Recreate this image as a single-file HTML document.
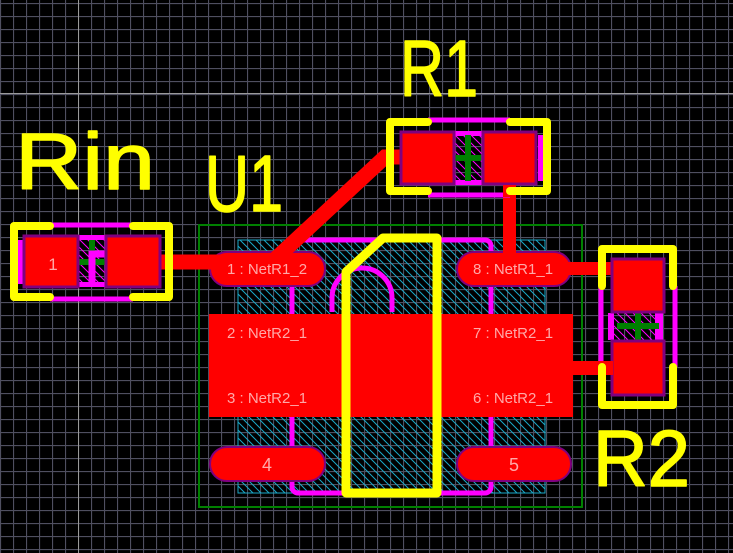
<!DOCTYPE html>
<html><head><meta charset="utf-8"><style>html,body{margin:0;padding:0;background:#000;width:733px;height:553px;overflow:hidden}svg{display:block}</style></head><body>
<svg width="733" height="553" viewBox="0 0 733 553" xmlns="http://www.w3.org/2000/svg">
<defs>
<pattern id="g" x="0" y="3" width="13" height="13" patternUnits="userSpaceOnUse">
<path d="M0.5 0V13M0 0.5H13" stroke="#4f4f60" stroke-width="1.2" fill="none"/>
</pattern>
<pattern id="h" width="8" height="8" patternUnits="userSpaceOnUse">
<path d="M0 0L8 8M-4 4L4 12M4 -4L12 4" stroke="#1aa8c8" stroke-width="1"/>
</pattern>
<pattern id="m" width="8" height="8" patternUnits="userSpaceOnUse">
<path d="M0 0L8 8M-4 4L4 12M4 -4L12 4" stroke="#ff00ff" stroke-width="1"/>
</pattern>
</defs>
<rect width="733" height="553" fill="#000"/>
<rect width="733" height="553" fill="url(#g)"/>
<line x1="78.5" y1="0" x2="78.5" y2="553" stroke="#9a9a9a"/>
<line x1="0" y1="93.5" x2="733" y2="93.5" stroke="#9a9a9a"/>

<!-- U1 -->
<rect x="199" y="225" width="383" height="282" fill="none" stroke="#008000" stroke-width="2"/>
<rect x="238" y="240" width="307" height="253" fill="url(#h)" stroke="#1aa8c8" stroke-width="1"/>
<rect x="292" y="240" width="199" height="253" rx="6" fill="none" stroke="#ff00ff" stroke-width="5"/>
<path d="M332 312V298A30 30 0 0 1 392 298V312" fill="none" stroke="#ff00ff" stroke-width="5"/>
<rect x="209" y="314" width="364" height="103" fill="#ff0000"/>
<rect x="570" y="361" width="40" height="14" fill="#ff0000"/>
<g fill="#ff0000" stroke="#800080" stroke-width="2">
<rect x="210" y="252" width="115" height="34" rx="17"/>
<rect x="457" y="252" width="114" height="34" rx="17"/>
<rect x="210" y="447" width="115" height="34" rx="17"/>
<rect x="457" y="447" width="114" height="34" rx="17"/>
</g>
<!-- traces -->
<path d="M160 262H272L385 157H402" fill="none" stroke="#ff0000" stroke-width="15"/>
<rect x="503" y="185" width="13" height="72" fill="#ff0000"/>
<rect x="565" y="262" width="50" height="13" fill="#ff0000"/>
<path d="M346 272L383 238H437V493H346Z" fill="none" stroke="#ffff00" stroke-width="9" stroke-linejoin="round"/>
<g font-family="Liberation Sans, sans-serif" font-size="15" fill="#ffa8a8">
<text x="227" y="274">1 : NetR1_2</text>
<text x="473" y="274">8 : NetR1_1</text>
<text x="227" y="338">2 : NetR2_1</text>
<text x="473" y="338">7 : NetR2_1</text>
<text x="227" y="403">3 : NetR2_1</text>
<text x="473" y="403">6 : NetR2_1</text>
<text x="267" y="471" font-size="18" text-anchor="middle">4</text>
<text x="514" y="471" font-size="18" text-anchor="middle">5</text>
</g>

<!-- Rin -->
<rect x="17" y="240" width="8" height="44" fill="#ff00ff"/>
<path d="M50 225H133M50 299H133" stroke="#ff00ff" stroke-width="5"/>
<rect x="79" y="237" width="26" height="49" fill="url(#m)"/>
<rect x="79" y="235" width="26" height="5" fill="#ff00ff"/><rect x="79" y="282" width="26" height="5" fill="#ff00ff"/>
<path d="M92 240V264M79 262H105" stroke="#008000" stroke-width="6"/>
<path d="M92 286V254H105" stroke="#ff00ff" stroke-width="7" fill="none"/>
<g fill="#ff0000" stroke="#800080" stroke-width="3">
<rect x="24" y="236" width="54" height="51"/>
<rect x="106" y="236" width="54" height="51"/>
</g>
<text x="53" y="270" font-family="Liberation Sans, sans-serif" font-size="17" fill="#ffa8a8" text-anchor="middle">1</text>
<path d="M50 226H14V297H50M133 226H169V297H133" fill="none" stroke="#ffff00" stroke-width="8" stroke-linecap="round" stroke-linejoin="round"/>

<!-- R1 -->
<path d="M428 120H510M428 195H510" stroke="#ff00ff" stroke-width="5"/>
<rect x="538" y="135" width="6" height="46" fill="#ff00ff"/>
<rect x="455" y="133" width="27" height="50" fill="url(#m)"/>
<rect x="455" y="131" width="27" height="5" fill="#ff00ff"/><rect x="455" y="180" width="27" height="5" fill="#ff00ff"/>
<path d="M468 135V181M455 158H481" stroke="#008000" stroke-width="6"/>
<g fill="#ff0000" stroke="#800080" stroke-width="3">
<rect x="401" y="132" width="53" height="52"/>
<rect x="483" y="132" width="53" height="52"/>
</g>
<rect x="503" y="185" width="13" height="12" fill="#ff0000"/>
<path d="M428 122H390V191H428M510 122H547V191H510" fill="none" stroke="#ffff00" stroke-width="8" stroke-linecap="round" stroke-linejoin="round"/>

<!-- R2 -->
<path d="M601 286V367M675 286V367" stroke="#ff00ff" stroke-width="5"/>
<rect x="613" y="313" width="49" height="27" fill="url(#m)"/>
<rect x="608" y="313" width="6" height="27" fill="#ff00ff"/><rect x="655" y="313" width="8" height="27" fill="#ff00ff"/>
<path d="M617 326H659M638 313V340" stroke="#008000" stroke-width="6"/>
<g fill="#ff0000" stroke="#800080" stroke-width="3">
<rect x="612" y="259" width="52" height="53"/>
<rect x="612" y="341" width="52" height="54"/>
</g>
<rect x="565" y="361" width="48" height="14" fill="#ff0000"/>
<path d="M602 286V249H673V286M602 367V405H673V367" fill="none" stroke="#ffff00" stroke-width="8" stroke-linecap="round" stroke-linejoin="round"/>

<!-- labels -->
<g font-family="Liberation Sans, sans-serif" font-size="80" fill="#ffff00" stroke="#ffff00" stroke-width="1.5" stroke-linejoin="round">
<text x="400" y="96" textLength="78" lengthAdjust="spacingAndGlyphs">R1</text>
<text x="15" y="189" textLength="140" lengthAdjust="spacingAndGlyphs">Rin</text>
<text x="205" y="211" textLength="78" lengthAdjust="spacingAndGlyphs">U1</text>
<text x="593" y="486" textLength="97" lengthAdjust="spacingAndGlyphs">R2</text>
</g>
</svg>
</body></html>
